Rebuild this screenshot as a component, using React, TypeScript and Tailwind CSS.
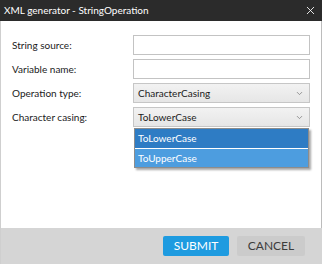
import { ChevronDown, X } from "lucide-react";

const font = "font-['Lato','Noto_Sans',sans-serif]";

function TextField() {
  return <div className="h-[20px] border border-[#c3c3c3] bg-white" />;
}

function SelectBox({ value }: { value: string }) {
  return (
    <div className="flex h-[20px] items-center justify-between border border-[#c6c6c6] bg-gradient-to-b from-[#f2f2f2] to-[#e6e6e6] pl-[4px] pr-[5px] text-[10px] text-[#1b1b1b]">
      <span>{value}</span>
      <ChevronDown size={9} strokeWidth={2} className="text-[#7a7a7a]" />
    </div>
  );
}

export default function App() {
  const rows = [
    { label: "String source:", field: <TextField /> },
    { label: "Variable name:", field: <TextField /> },
    { label: "Operation type:", field: <SelectBox value="CharacterCasing" /> },
  ];

  return (
    <div className={`flex h-[264px] w-[322px] flex-col bg-white ${font}`}>
      <div className="flex h-[21px] items-center justify-between bg-[#2b2b2b] pl-[4px] pr-[5px] text-[10px] text-white">
        <span>XML generator - StringOperation</span>
        <X size={13} strokeWidth={1.6} />
      </div>

      <div className="flex flex-1 flex-col gap-[4px] border-x border-l-[#cfcfcf] border-r-[#bcbcbc] pl-[11px] pr-[11px] pt-[14px]">
        {rows.map((r) => (
          <div key={r.label} className="grid grid-cols-[121px_177px] items-center">
            <span className="text-[10px] text-[#1b1b1b]">{r.label}</span>
            {r.field}
          </div>
        ))}
        <div className="grid grid-cols-[121px_177px] items-center">
          <span className="text-[10px] text-[#1b1b1b]">Character casing:</span>
          <div className="relative">
            <SelectBox value="ToLowerCase" />
            <ul className="absolute left-[1px] right-[1px] top-full z-10 mt-[1px] border border-[#8c8c8c] bg-white text-[10px] text-white shadow-[2px_2px_2px_rgba(0,0,0,0.35)]">
              <li className="flex h-[19px] items-center bg-[#2e7cc4] pl-[3px]">ToLowerCase</li>
              <li className="flex h-[19px] items-center border-t border-white bg-[#4d9ddf] pl-[3px]">
                ToUpperCase
              </li>
            </ul>
          </div>
        </div>
      </div>

      <div className="flex h-[36px] items-start justify-end gap-[8px] border-l border-[#cfcfcf] bg-[#d5d5d5] pr-[17px] pt-[8px]">
        <button className="h-[20px] w-[66px] rounded-[2px] bg-[#1e9be0] text-[12px] text-white">
          SUBMIT
        </button>
        <button className="h-[20px] w-[68px] rounded-[2px] bg-[#cbcbcb] text-[12px] text-[#3c3c3c]">
          CANCEL
        </button>
      </div>
    </div>
  );
}
